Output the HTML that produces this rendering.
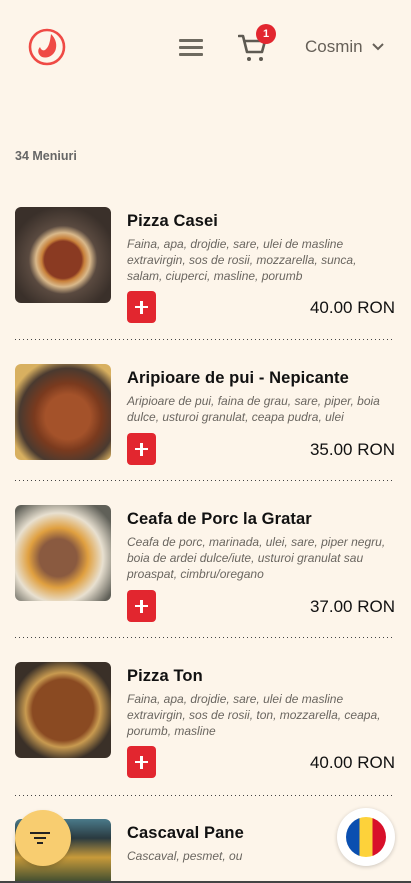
<!DOCTYPE html>
<html><head><meta charset="utf-8"><style>
*{margin:0;padding:0;box-sizing:border-box}
html,body{width:411px;height:883px;overflow:hidden}
body{background:#fdf5ea;font-family:"Liberation Sans",sans-serif;position:relative}
.a{position:absolute}
.img{position:absolute;left:15px;width:96px;height:96px;border-radius:6px;overflow:hidden}
.t{position:absolute;left:127px;font-size:16.5px;color:#111;font-weight:bold;letter-spacing:.1px}
.d{position:absolute;left:127px;width:268px;font-size:12px;line-height:16px;color:#6a6660;font-style:italic}
.btn{position:absolute;left:127px;width:29px;height:32px;background:#e2262f;border-radius:4px}
.btn:before{content:"";position:absolute;left:8px;top:15px;width:13px;height:2.4px;background:#fff}
.btn:after{content:"";position:absolute;left:13.3px;top:9.5px;width:2.4px;height:13px;background:#fff}
.p{position:absolute;right:16px;font-size:17px;color:#111}
.sep{position:absolute;left:15px;width:380px;height:1px;background:repeating-linear-gradient(90deg,#444 0 1px,transparent 1px 4px)}
</style></head><body>
<svg class="a" style="left:28px;top:28px" width="38" height="38" viewBox="0 0 38 38"><circle cx="19" cy="19" r="17" fill="none" stroke="#ef4a45" stroke-width="2.6"/><path d="M23 6c4 4 6 9 5 14-1 7-8 11-14 9-4-2-5-7-2-10 1 3 3 4 5 3 4-3 5-8 6-16z" fill="#ef4a45"/></svg>
<div class="a" style="left:179px;top:39px;width:24px;height:3px;background:#6e6a60;box-shadow:0 7px 0 #6e6a60,0 14px 0 #6e6a60;border-radius:1px"></div>
<svg class="a" style="left:238px;top:34px" width="30" height="28" viewBox="0 0 30 28"><path d="M1 2h4l4 16h15l3-11H7" fill="none" stroke="#5e5a52" stroke-width="2.6" stroke-linejoin="round" stroke-linecap="round"/><circle cx="11" cy="25" r="2" fill="#5e5a52"/><circle cx="23" cy="25" r="2" fill="#5e5a52"/></svg>
<div class="a" style="left:256px;top:24px;width:20px;height:20px;border-radius:50%;background:#e2262f;color:#fff;font-size:11px;font-weight:bold;text-align:center;line-height:20px">1</div>
<div class="a" style="left:305px;top:37px;font-size:17px;color:#666058">Cosmin</div>
<svg class="a" style="left:372px;top:43px" width="12" height="8" viewBox="0 0 12 8"><path d="M1 1l5 5 5-5" fill="none" stroke="#666058" stroke-width="2"/></svg>
<div class="a" style="left:15px;top:149px;font-size:12.5px;color:#666;font-weight:bold">34 Meniuri</div>

<div class="img" style="top:207px;background:radial-gradient(circle at 50% 55%,#8a3a22 0 26%,#c8803a 30%,#d9b88a 38%,#5a4a40 48%,#3a302a 75%)"></div>
<div class="t" style="top:212px">Pizza Casei</div>
<div class="d" style="top:236px">Faina, apa, drojdie, sare, ulei de masline extravirgin, sos de rosii, mozzarella, sunca, salam, ciuperci, masline, porumb</div>
<div class="btn" style="top:291px"></div>
<div class="p" style="top:298px">40.00 RON</div>
<div class="sep" style="top:339px"></div>

<div class="img" style="top:364px;background:radial-gradient(circle at 55% 55%,#a4522a 0 30%,#7a3a1e 45%,#4a3a30 65%,#d8b060 80%)"></div>
<div class="t" style="top:369px">Aripioare de pui - Nepicante</div>
<div class="d" style="top:393px">Aripioare de pui, faina de grau, sare, piper, boia dulce, usturoi granulat, ceapa pudra, ulei</div>
<div class="btn" style="top:433px"></div>
<div class="p" style="top:440px">35.00 RON</div>
<div class="sep" style="top:480px"></div>

<div class="img" style="top:505px;background:radial-gradient(circle at 45% 55%,#8a5a40 0 25%,#e0a040 40%,#e8e0d0 60%,#606058 85%)"></div>
<div class="t" style="top:510px">Ceafa de Porc la Gratar</div>
<div class="d" style="top:534px">Ceafa de porc, marinada, ulei, sare, piper negru, boia de ardei dulce/iute, usturoi granulat sau proaspat, cimbru/oregano</div>
<div class="btn" style="top:590px"></div>
<div class="p" style="top:597px">37.00 RON</div>
<div class="sep" style="top:637px"></div>

<div class="img" style="top:662px;background:radial-gradient(circle at 50% 50%,#8a4a22 0 45%,#c89a50 55%,#3a3028 75%)"></div>
<div class="t" style="top:667px">Pizza Ton</div>
<div class="d" style="top:691px">Faina, apa, drojdie, sare, ulei de masline extravirgin, sos de rosii, ton, mozzarella, ceapa, porumb, masline</div>
<div class="btn" style="top:746px"></div>
<div class="p" style="top:753px">40.00 RON</div>
<div class="sep" style="top:795px"></div>

<div class="img" style="top:819px;height:64px;border-radius:6px 6px 0 0;background:linear-gradient(180deg,#4a7a8a 0,#2a3a40 30%,#c89a3a 60%,#3a4a30 100%)"></div>
<div class="t" style="top:824px">Cascaval Pane</div>
<div class="d" style="top:848px">Cascaval, pesmet, ou</div>

<div class="a" style="left:15px;top:810px;width:56px;height:56px;border-radius:50%;background:#f8cd70;box-shadow:0 2px 4px rgba(0,0,0,.15)"></div>
<div class="a" style="left:30px;top:832px;width:20px;height:2px;background:#222"></div>
<div class="a" style="left:34px;top:837px;width:12px;height:2px;background:#222"></div>
<div class="a" style="left:37px;top:842px;width:6px;height:2px;background:#222"></div>
<div class="a" style="left:337px;top:808px;width:58px;height:58px;border-radius:50%;background:#fff;box-shadow:0 1px 4px rgba(0,0,0,.2)"></div>
<div class="a" style="left:346px;top:817px;width:40px;height:40px;border-radius:50%;overflow:hidden;background:linear-gradient(90deg,#0a4fb0 0 33.3%,#fdd23a 33.3% 66.6%,#d8102a 66.6%)"></div>
<div class="a" style="left:0;top:881px;width:411px;height:2px;background:#444"></div>
</body></html>
